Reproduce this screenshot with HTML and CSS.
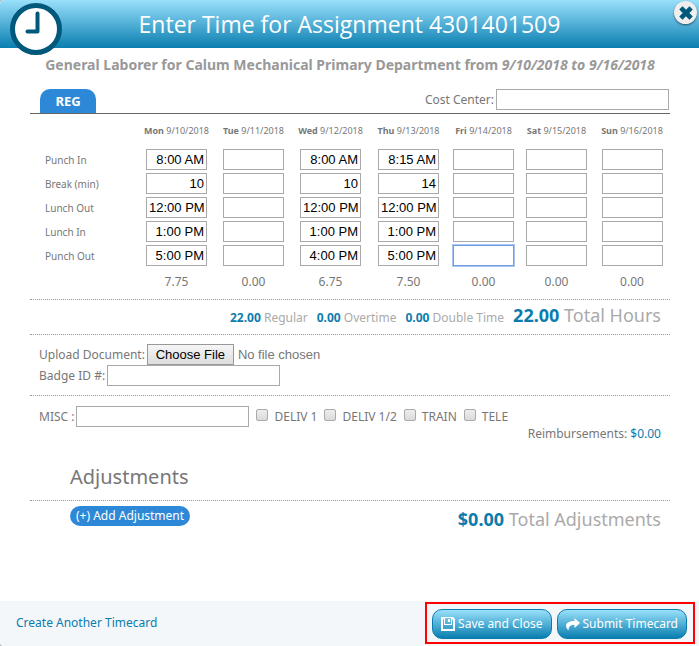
FILE: index.html
```html
<!DOCTYPE html>
<html lang="en">
<head>
<meta charset="utf-8">
<meta name="viewport" content="width=device-width, initial-scale=1">
<title>Enter Time for Assignment</title>
<link rel="stylesheet" href="styles.css">
</head>
<body>
<main class="dialog">
  <header class="titlebar">
    <svg class="clock" viewBox="0 0 52 52" aria-hidden="true">
      <circle cx="26" cy="26" r="23.5" fill="#fff" stroke="#00597b" stroke-width="5"/>
      <path d="M27.5 10.5V28.5H17.5" fill="none" stroke="#00597b" stroke-width="4" stroke-linecap="round" stroke-linejoin="round"/>
    </svg>
    <h1>Enter Time for Assignment 4301401509</h1>
    <button class="close" type="button" aria-label="Close">
      <svg viewBox="0 0 14 14" aria-hidden="true"><path d="M3.500 3.500L10.500 10.500M10.500 3.500L3.500 10.500" stroke="#00597b" stroke-width="4.600" stroke-linecap="square"/></svg>
    </button>
  </header>

  <form class="body">
    <p class="subtitle">General Laborer for Calum Mechanical Primary Department from <em>9/10/2018 to 9/16/2018</em></p>

    <div class="tabs">
      <button class="tab" type="button">REG</button>
      <div class="field"><label for="cost">Cost Center:</label><input class="text" id="cost" type="text"></div>
    </div>

    <table class="times">
      <colgroup><col class="c-label"><col class="c-mon"><col class="c-mon"><col class="c-mon"><col class="c-thu"><col class="c-fri"><col class="c-sat"><col></colgroup>
      <thead>
        <tr><td></td><th scope="col">Mon <span>9/10/2018</span></th><th scope="col">Tue <span>9/11/2018</span></th><th scope="col">Wed <span>9/12/2018</span></th><th scope="col">Thu <span>9/13/2018</span></th><th scope="col">Fri <span>9/14/2018</span></th><th scope="col">Sat <span>9/15/2018</span></th><th scope="col">Sun <span>9/16/2018</span></th></tr>
      </thead>
      <tbody>
        <tr><th scope="row">Punch In</th><td><input aria-label="Monday punch in" value="8:00 AM"></td><td><input aria-label="Tuesday punch in"></td><td><input aria-label="Wednesday punch in" value="8:00 AM"></td><td><input aria-label="Thursday punch in" value="8:15 AM"></td><td><input aria-label="Friday punch in"></td><td><input aria-label="Saturday punch in"></td><td><input aria-label="Sunday punch in"></td></tr>
        <tr><th scope="row">Break (min)</th><td><input aria-label="Monday break" value="10"></td><td><input aria-label="Tuesday break"></td><td><input aria-label="Wednesday break" value="10"></td><td><input aria-label="Thursday break" value="14"></td><td><input aria-label="Friday break"></td><td><input aria-label="Saturday break"></td><td><input aria-label="Sunday break"></td></tr>
        <tr><th scope="row">Lunch Out</th><td><input aria-label="Monday lunch out" value="12:00 PM"></td><td><input aria-label="Tuesday lunch out"></td><td><input aria-label="Wednesday lunch out" value="12:00 PM"></td><td><input aria-label="Thursday lunch out" value="12:00 PM"></td><td><input aria-label="Friday lunch out"></td><td><input aria-label="Saturday lunch out"></td><td><input aria-label="Sunday lunch out"></td></tr>
        <tr><th scope="row">Lunch In</th><td><input aria-label="Monday lunch in" value="1:00 PM"></td><td><input aria-label="Tuesday lunch in"></td><td><input aria-label="Wednesday lunch in" value="1:00 PM"></td><td><input aria-label="Thursday lunch in" value="1:00 PM"></td><td><input aria-label="Friday lunch in"></td><td><input aria-label="Saturday lunch in"></td><td><input aria-label="Sunday lunch in"></td></tr>
        <tr><th scope="row">Punch Out</th><td><input aria-label="Monday punch out" value="5:00 PM"></td><td><input aria-label="Tuesday punch out"></td><td><input aria-label="Wednesday punch out" value="4:00 PM"></td><td><input aria-label="Thursday punch out" value="5:00 PM"></td><td><input class="active" aria-label="Friday punch out"></td><td><input aria-label="Saturday punch out"></td><td><input aria-label="Sunday punch out"></td></tr>
      </tbody>
      <tfoot>
        <tr><td></td><td>7.75</td><td>0.00</td><td>6.75</td><td>7.50</td><td>0.00</td><td>0.00</td><td>0.00</td></tr>
      </tfoot>
    </table>

    <div class="totals">
      <span><b>22.00</b> Regular</span>
      <span><b>0.00</b> Overtime</span>
      <span><b>0.00</b> Double Time</span>
      <span class="grand"><b>22.00</b> Total Hours</span>
    </div>

    <div class="details">
      <div class="field"><label for="doc">Upload Document:</label><input class="file" id="doc" type="file"></div>
      <div class="field"><label for="badge">Badge ID #:</label><input class="text" id="badge" type="text"></div>
    </div>

    <div class="misc">
      <div class="field"><label for="misc">MISC :</label><input class="text" id="misc" type="text"></div>
      <label class="check"><input type="checkbox">DELIV 1</label>
      <label class="check"><input type="checkbox">DELIV 1/2</label>
      <label class="check"><input type="checkbox">TRAIN</label>
      <label class="check"><input type="checkbox">TELE</label>
    </div>
    <p class="reimb">Reimbursements: <a href="#">$0.00</a></p>

    <h2>Adjustments</h2>
    <div class="adjust">
      <button class="add" type="button">(+) Add Adjustment</button>
      <span class="grand"><b>$0.00</b> Total Adjustments</span>
    </div>
  </form>

  <footer class="footer">
    <a href="#">Create Another Timecard</a>
    <div class="actions">
      <button class="primary" type="button">
        <svg viewBox="0 0 14 14" aria-hidden="true"><path fill="#fff" fill-rule="evenodd" d="M0 0H12L14 2V14H0ZM2 2V12H12V3L11 2V8H3V2ZM4 1V7H10V1ZM7 2H9V5H7Z"/></svg>
        Save and Close</button>
      <button class="primary" type="button">
        <svg viewBox="0 0 14 14" aria-hidden="true"><path fill="#fff" d="M8.500 1L14 6L8.500 11V8C4.500 7.800 2.700 9.500 2.500 13.500C0.500 11.500 0 9.500 0 8.500C0.500 5.500 3.500 4 8.500 4Z"/></svg>
        Submit Timecard</button>
    </div>
  </footer>
</main>
</body>
</html>
```
FILE: styles.css
```css
* { box-sizing: border-box; }

body {
  margin: 0;
  background: #b5b9bc;
  color: #777;
  font: 12px/18px "Noto Sans", "Open Sans", sans-serif;
}

h1, h2, p { margin: 0; }
a { color: #0b7cae; text-decoration: none; }
button, input { font: inherit; }
button { cursor: pointer; }

.dialog {
  display: flex;
  flex-direction: column;
  min-height: 100vh;
  overflow: hidden;
  background: #fff;
  border-radius: 4px 0 0 4px;
}

/* Title bar */
.titlebar {
  position: relative;
  height: 48px;
  background: linear-gradient(#99e0fb, #0a7eb0);
}
.titlebar h1 {
  color: #fff;
  font-family: "Open Sans", sans-serif;
  font-size: 23px;
  font-weight: 400;
  line-height: 48px;
  text-align: center;
}
.clock {
  position: absolute;
  left: 10px;
  top: 3px;
  width: 52px;
  height: 52px;
}
.close {
  position: absolute;
  right: 2px;
  top: 1px;
  display: grid;
  place-items: center;
  width: 23px;
  height: 23px;
  padding: 0;
  border: 0;
  border-radius: 50%;
  background: #eee;
  box-shadow: 0 1px 2px #0008;
}
.close svg { width: 14px; height: 14px; }

/* Body */
.body { flex: 1; padding: 8px 29px 0 30px; }
.subtitle {
  color: #999;
  font-size: 14px;
  font-weight: 700;
  text-align: center;
}
.field { display: flex; align-items: center; gap: 2px; }
.text {
  width: 173px;
  height: 21px;
  padding: 1px;
  border: 1px solid #a9a9a9;
}

.tabs {
  display: flex;
  justify-content: space-between;
  margin-top: 15px;
  padding: 0 1px 0 10px;
  border-bottom: 1px solid #666;
}
.tab {
  width: 56px;
  height: 24px;
  padding: 0;
  border: 0;
  border-radius: 10px 10px 0 0;
  background: #2d89d8;
  color: #fff;
  font-size: 13px;
  font-weight: 700;
}
.tabs .field { height: 21px; }

/* Time grid */
.times {
  width: 100%;
  border-collapse: collapse;
  table-layout: fixed;
}
.c-label { width: 108px; }
.c-mon { width: 77px; }
.c-thu { width: 79px; }
.c-fri { width: 71px; }
.c-sat { width: 75px; }
.times th, .times td { padding: 0; text-align: center; }
.times thead th { height: 34px; font-size: 9px; white-space: nowrap; }
.times thead span { font-weight: 400; }
.times tbody tr { height: 24px; }
.times tbody th {
  padding-left: 15px;
  font-size: 10px;
  font-weight: 400;
  text-align: left;
}
.times tbody td { vertical-align: top; }
.times input {
  display: block;
  width: 61px;
  height: 21px;
  margin: 1px auto 0;
  padding: 1px 2px;
  border: 1px solid #a9a9a9;
  color: #000;
  font: 13px "Liberation Sans", sans-serif;
  text-align: right;
}
.times .active { border-color: #6f9be0; box-shadow: 0 0 0 1px #a9c6f5; }
.times tfoot td { height: 31px; padding-bottom: 3px; }

/* Sections */
.totals, .details, .misc { border-top: 1px dotted #999; }
.totals {
  display: flex;
  justify-content: flex-end;
  align-items: baseline;
  gap: 9px;
  height: 35px;
  padding: 3px 9px 0 0;
  color: #aaa;
}
.totals b, .adjust b { color: #0b7cae; }
.grand { font-size: 18px; line-height: 24px; color: #aaa; }
.details { height: 61px; padding: 9px 0 0 9px; }
.file {
  color: #777;
  font: 13px "Liberation Sans", sans-serif;
}
.file::file-selector-button {
  width: 87px;
  height: 21px;
  margin: 0 4px 0 0;
  padding: 0;
  border: 1px solid #999;
  border-radius: 0;
  background: linear-gradient(#f6f6f6, #ddd);
  color: #000;
  font: 13px "Liberation Sans", sans-serif;
}
.misc { display: flex; align-items: center; padding: 10px 0 0 9px; }
.check { display: flex; align-items: center; gap: 6px; margin-left: 7px; }
.check input {
  appearance: none;
  width: 12px;
  height: 12px;
  margin: 0 0 4px;
  border: 1px solid #aaa;
  border-radius: 2px;
  background: linear-gradient(#eee, #dadada);
}
.reimb { margin-top: -2px; padding-right: 9px; text-align: right; }
h2 {
  margin-top: 20px;
  padding: 0 0 9px 40px;
  border-bottom: 1px dotted #999;
  font-size: 20px;
  font-weight: 400;
  line-height: 28px;
}
.adjust {
  display: flex;
  justify-content: space-between;
  padding: 5px 9px 30px 40px;
}
.add {
  height: 20px;
  padding: 0 6px;
  border: 0;
  border-radius: 10px;
  background: #2d89d8;
  color: #fff;
}
.adjust .grand { padding-top: 1px; }

/* Footer */
.footer {
  display: flex;
  justify-content: space-between;
  align-items: center;
  height: 45px;
  padding: 0 4px 2px 16px;
  background: #f3f7fa;
}
.actions {
  display: flex;
  gap: 5px;
  padding: 5px 6px 3px 5px;
  border: 2px solid #f00;
}
.primary {
  display: flex;
  align-items: center;
  gap: 3px;
  height: 30px;
  padding: 0 8px;
  border: 1px solid #0b7cae;
  border-radius: 10px;
  background: linear-gradient(#99e0fb, #0a7eb0);
  color: #fff;
}
.primary svg { width: 14px; height: 14px; }
```
